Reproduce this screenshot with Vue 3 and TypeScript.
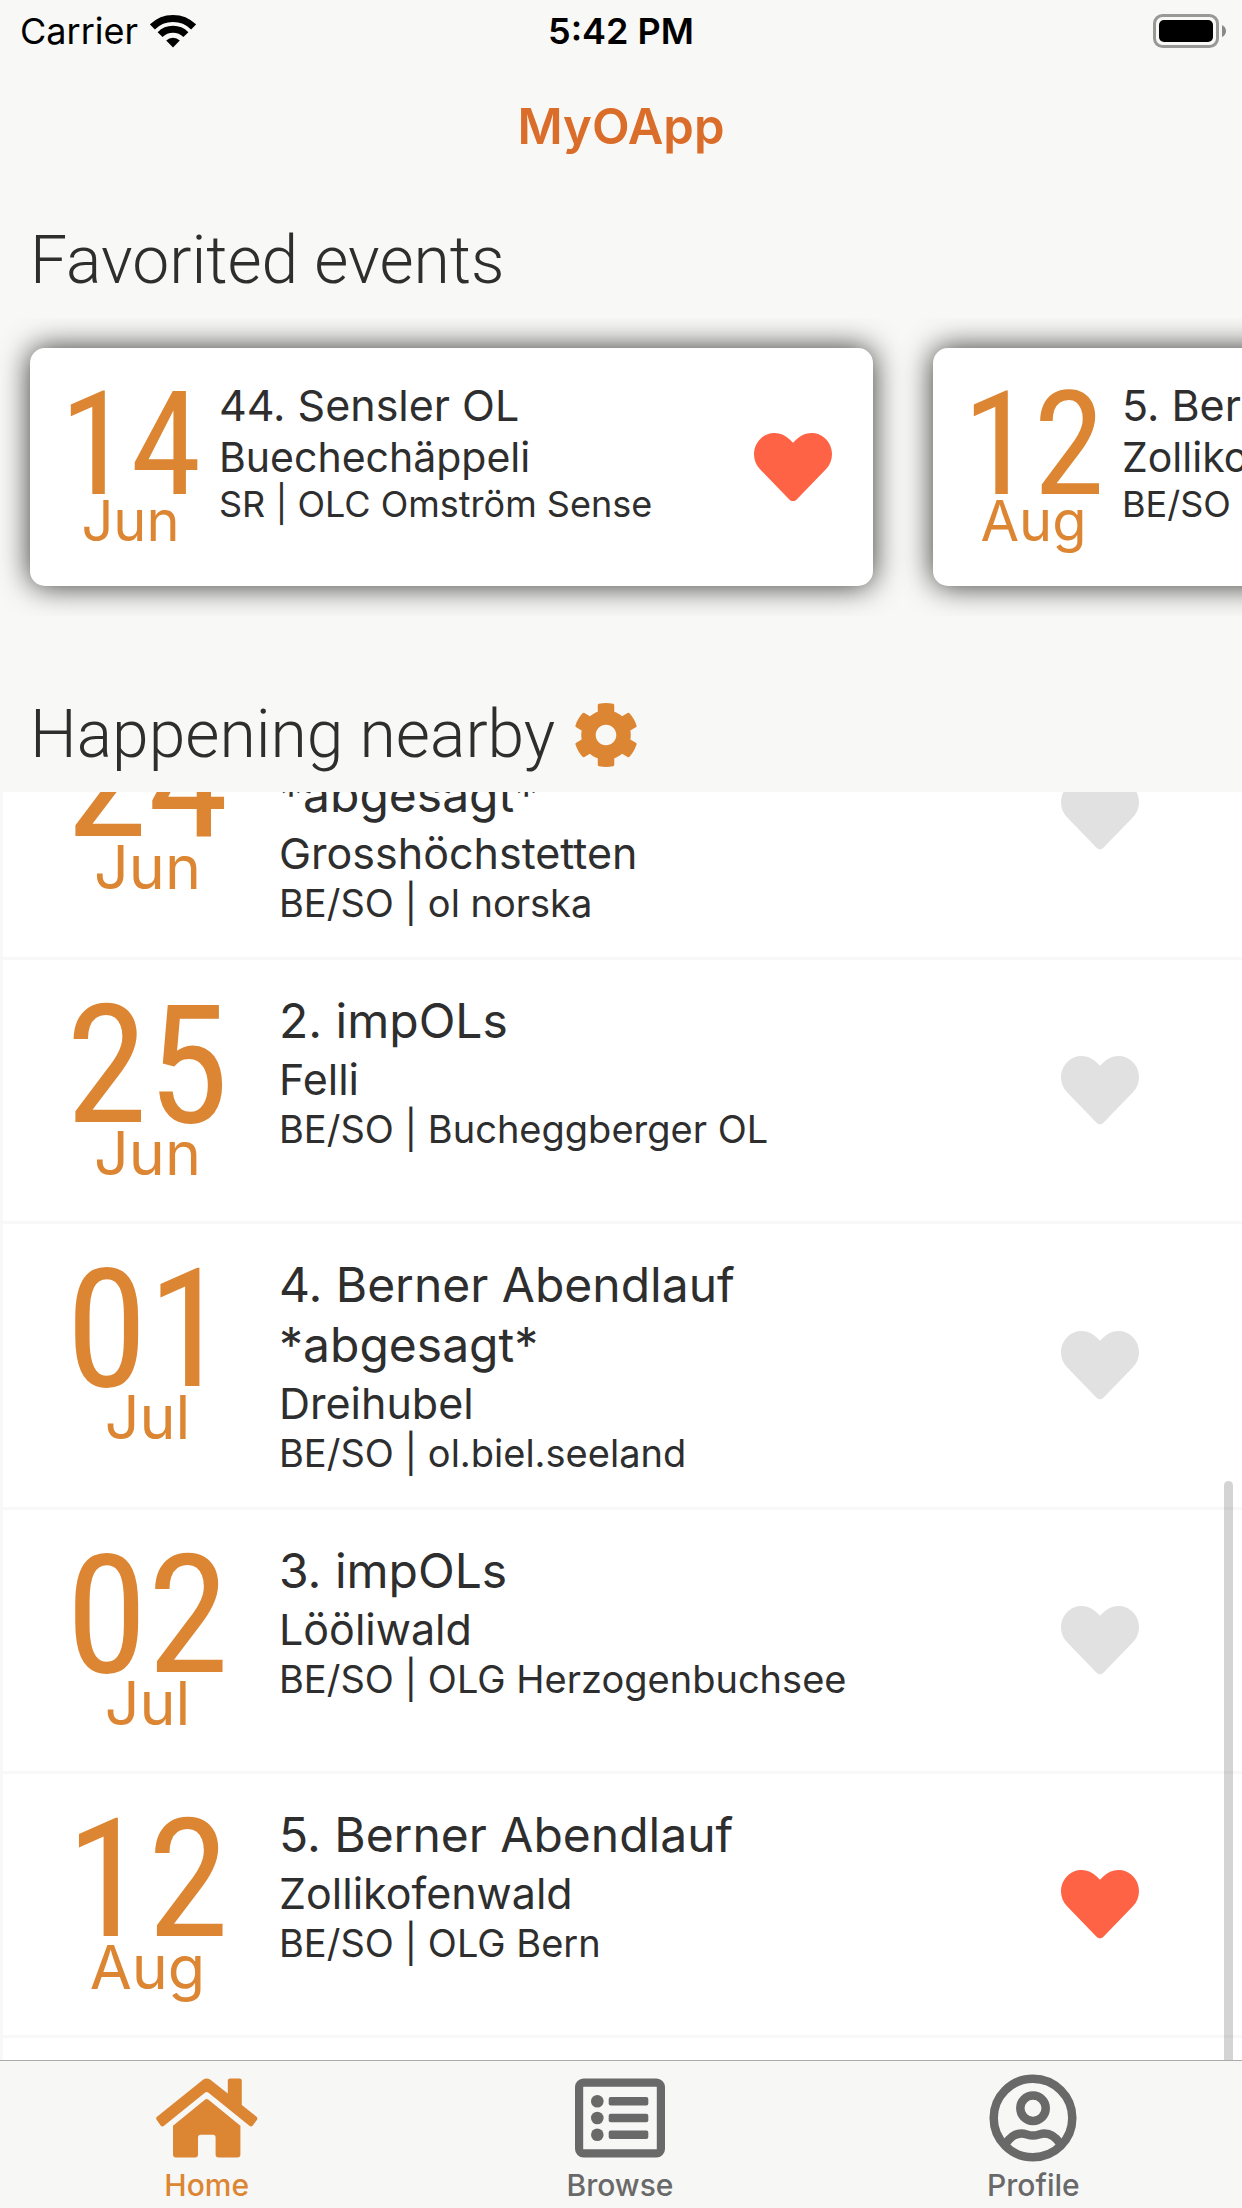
<script setup lang="ts">
import { onMounted, ref } from 'vue'

interface OEvent {
  id: number
  day: string
  month: string
  title: string
  place: string
  organiser: string
  favorite: boolean
}

const favorites = ref<OEvent[]>([
  { id: 1, day: '14', month: 'Jun', title: '44. Sensler OL', place: 'Buechechäppeli', organiser: 'SR | OLC Omström Sense', favorite: true },
  { id: 7, day: '12', month: 'Aug', title: '5. Berner Abendlauf', place: 'Zollikofenwald', organiser: 'BE/SO | OLG Bern', favorite: true },
])

const nearby = ref<OEvent[]>([
  { id: 3, day: '24', month: 'Jun', title: '3. Berner Abendlauf *abgesagt*', place: 'Grosshöchstetten', organiser: 'BE/SO | ol norska', favorite: false },
  { id: 4, day: '25', month: 'Jun', title: '2. impOLs', place: 'Felli', organiser: 'BE/SO | Bucheggberger OL', favorite: false },
  { id: 5, day: '01', month: 'Jul', title: '4. Berner Abendlauf *abgesagt*', place: 'Dreihubel', organiser: 'BE/SO | ol.biel.seeland', favorite: false },
  { id: 6, day: '02', month: 'Jul', title: '3. impOLs', place: 'Lööliwald', organiser: 'BE/SO | OLG Herzogenbuchsee', favorite: false },
  { id: 7, day: '12', month: 'Aug', title: '5. Berner Abendlauf', place: 'Zollikofenwald', organiser: 'BE/SO | OLG Bern', favorite: true },
])

const list = ref<HTMLElement | null>(null)

onMounted(() => {
  if (list.value) list.value.scrollTop = 118
})

const heartPath =
  'M462.3 62.6C407.5 15.9 326 24.3 275.7 76.2L256 96.5l-19.7-20.3C186.1 24.3 104.5 15.9 49.7 62.6c-62.8 53.6-66.1 149.8-9.9 207.9l193.5 199.8c12.5 12.9 32.8 12.9 45.3 0l193.5-199.8c56.3-58.1 53-154.3-9.8-207.9z'
</script>

<template>
  <div class="app">
    <div class="status">
      <div class="carrier">
        <span>Carrier</span>
        <svg width="46" height="34" viewBox="0 0 46 34" aria-hidden="true">
          <g fill="none" stroke="#000" stroke-width="7">
            <path d="M2.4 12.9A29.2 29.2 0 0 1 43.6 12.9" />
            <path d="M10.1 20.6A18.2 18.2 0 0 1 35.9 20.6" />
          </g>
          <path d="M23 33.5L16.2 26.6A9.8 9.8 0 0 1 29.8 26.6Z" />
        </svg>
      </div>
      <div class="time">5:42 PM</div>
      <div class="battery">
        <svg width="74" height="34" viewBox="0 0 74 34" aria-hidden="true">
          <rect x="2.5" y="1.5" width="63" height="31" rx="8" fill="none" stroke="#989896" stroke-width="3" />
          <rect x="7" y="6" width="54" height="22" rx="5" />
          <path d="M70 11Q74 13 74 17T70 23Z" fill="#8a8a88" />
        </svg>
      </div>
    </div>

    <header class="navbar">
      <h1>MyOApp</h1>
    </header>

    <section class="favorites">
      <h2 class="heading">Favorited events</h2>
      <div class="cards">
        <article v-for="event in favorites" :key="event.id" class="card">
          <div class="date">
            <span class="day">{{ event.day }}</span>
            <span class="month">{{ event.month }}</span>
          </div>
          <div class="info">
            <div class="title">{{ event.title }}</div>
            <div class="place">{{ event.place }}</div>
            <div class="organiser">{{ event.organiser }}</div>
          </div>
          <button
            type="button"
            class="heart"
            :class="{ active: event.favorite }"
            aria-label="Toggle favorite"
            @click="event.favorite = !event.favorite"
          >
            <svg viewBox="0 32 512 448" aria-hidden="true"><path :d="heartPath" /></svg>
          </button>
        </article>
      </div>
    </section>

    <section class="nearby">
      <div class="heading-row">
        <h2 class="heading">Happening nearby</h2>
        <button type="button" class="settings" aria-label="Settings">
          <svg viewBox="0 0 512 512" aria-hidden="true">
            <path d="M487.4 315.7l-42.6-24.6c4.3-23.2 4.3-47 0-70.2l42.6-24.6c4.9-2.8 7.1-8.6 5.5-14-11.1-35.6-30-67.8-54.7-94.6-3.8-4.1-10-5.1-14.8-2.3L380.8 110c-17.9-15.4-38.5-27.3-60.8-35.1V25.8c0-5.6-3.9-10.5-9.4-11.7-36.7-8.2-74.3-7.8-109.2 0-5.5 1.2-9.4 6.1-9.4 11.7V75c-22.2 7.9-42.8 19.8-60.8 35.1L88.7 85.5c-4.9-2.8-11-1.9-14.8 2.3-24.7 26.7-43.6 58.9-54.7 94.6-1.7 5.4.6 11.2 5.5 14L67.3 221c-4.3 23.2-4.3 47 0 70.2l-42.6 24.6c-4.9 2.8-7.1 8.6-5.5 14 11.1 35.6 30 67.8 54.7 94.6 3.8 4.1 10 5.1 14.8 2.3l42.6-24.6c17.9 15.4 38.5 27.3 60.8 35.1v49.2c0 5.6 3.9 10.5 9.4 11.7 36.7 8.2 74.3 7.8 109.2 0 5.5-1.2 9.4-6.1 9.4-11.7v-49.2c22.2-7.9 42.8-19.8 60.8-35.1l42.6 24.6c4.9 2.8 11 1.9 14.8-2.3 24.7-26.7 43.6-58.9 54.7-94.6 1.5-5.5-.7-11.3-5.6-14.1zM256 336c-44.1 0-80-35.9-80-80s35.9-80 80-80 80 35.9 80 80-35.9 80-80 80z" />
          </svg>
        </button>
      </div>
      <div class="list-frame">
        <div ref="list" class="list">
          <article v-for="event in nearby" :key="event.id" class="row">
            <div class="date">
              <span class="day">{{ event.day }}</span>
              <span class="month">{{ event.month }}</span>
            </div>
            <div class="info">
              <div class="title">{{ event.title }}</div>
              <div class="place">{{ event.place }}</div>
              <div class="organiser">{{ event.organiser }}</div>
            </div>
            <button
              type="button"
              class="heart"
              :class="{ active: event.favorite }"
              aria-label="Toggle favorite"
              @click="event.favorite = !event.favorite"
            >
              <svg viewBox="0 32 512 448" aria-hidden="true"><path :d="heartPath" /></svg>
            </button>
          </article>
        </div>
        <div class="thumb"></div>
      </div>
    </section>

    <nav class="tabs">
      <a href="#home" class="tab current" aria-current="page">
        <svg width="102" height="88" viewBox="0 -4.5 102 88" aria-hidden="true">
          <g fill="currentColor">
            <path d="M47 1.2Q50.7-1.2 54.4 1.2L71.8 15V2Q71.8 0 74 0H83.6Q85.8 0 85.8 2V26.5L100.5 38.2Q102 39.5 101 41.2L96.6 47.2Q95 48.8 93.4 47.2L52.2 14Q50.7 12.8 49.2 14L8 47.2Q6.4 48.8 4.8 47.2L.6 41.2Q-.5 39.5 1 38.2Z" />
            <path d="M49.2 21Q50.7 19.8 52.2 21L84.4 47.3V76Q84.4 79 81.4 79H62.6Q59.6 79 59.6 76V59Q59.6 56.3 57 56.3H44.7Q42 56.3 42 59V76Q42 79 39 79H20Q17 79 17 76V47.3Z" />
          </g>
        </svg>
        <span>Home</span>
      </a>
      <a href="#browse" class="tab">
        <svg width="90" height="88" viewBox="0 -4.5 90 88" aria-hidden="true">
          <rect x="4.1" y="4.1" width="81.8" height="70.8" rx="4.5" fill="none" stroke="currentColor" stroke-width="8.2" />
          <g fill="currentColor">
            <circle cx="22.3" cy="22.7" r="6.3" />
            <circle cx="22.3" cy="39.5" r="6.3" />
            <circle cx="22.3" cy="56.3" r="6.3" />
            <rect x="33.7" y="18.4" width="39.6" height="8.6" rx="2" />
            <rect x="33.7" y="35.2" width="39.6" height="8.6" rx="2" />
            <rect x="33.7" y="52" width="39.6" height="8.6" rx="2" />
          </g>
        </svg>
        <span>Browse</span>
      </a>
      <a href="#profile" class="tab">
        <svg width="88" height="88" viewBox="-44 -44 88 88" aria-hidden="true">
          <g fill="none" stroke="currentColor" stroke-width="8.5">
            <circle r="39.3" />
            <circle cy="-9.7" r="12.7" />
            <path d="M-27 25.5C-22 18-16 15.5-11.5 15.5S-5 17.5 0 17.5 7 15.5 11.5 15.5 22 18 27 25.5" />
          </g>
        </svg>
        <span>Profile</span>
      </a>
    </nav>
  </div>
</template>

<style>
body {
  margin: 0;
  background: #f8f8f6;
}
</style>

<style scoped>
.app {
  display: flex;
  flex-direction: column;
  height: 100vh;
  overflow: hidden;
  background: #f8f8f6;
  color: #2e2e2e;
  font-family: Inter, 'Liberation Sans', sans-serif;
}

button {
  padding: 0;
  border: 0;
  background: none;
  cursor: pointer;
}

svg {
  display: block;
}

.status {
  display: grid;
  grid-template-columns: 1fr auto 1fr;
  align-items: center;
  height: 62px;
  padding: 0 16px;
  color: #000;
  font-size: 36px;
  line-height: 60px;
}

.carrier {
  display: flex;
  align-items: center;
  gap: 12px;
  padding-left: 4px;
}

.time {
  font-weight: 600;
}

.battery {
  justify-self: end;
}

.navbar {
  display: flex;
  align-items: center;
  justify-content: center;
  height: 130px;
}

h1 {
  margin: 0;
  color: #db6d2b;
  font-size: 49px;
  font-weight: 600;
  line-height: 60px;
}

.heading {
  margin: 0;
  font-family: Roboto, sans-serif;
  font-size: 66px;
  font-weight: 300;
  line-height: 76px;
}

.favorites {
  padding-top: 31px;
}

.favorites .heading {
  padding: 0 30px;
}

.cards {
  display: flex;
  gap: 60px;
  margin-top: 19px;
  padding: 30px;
  overflow-x: auto;
  scrollbar-width: none;
}

.card {
  display: flex;
  flex: none;
  box-sizing: border-box;
  width: 843px;
  min-height: 238px;
  padding: 30px;
  border-radius: 15px;
  background: #fff;
  box-shadow: 0 0 30px rgba(0, 0, 0, 0.8);
}

.date {
  display: flex;
  flex: none;
  flex-direction: column;
  align-items: center;
  color: #dc8633;
}

.day {
  font-family: 'Roboto Condensed', Roboto, sans-serif;
}

.card .date {
  width: 141px;
  padding-top: 13px;
}

.card .day {
  font-size: 144px;
  line-height: 108px;
}

.card .month {
  font-size: 56px;
  line-height: 44px;
}

.info {
  flex: 1;
  min-width: 0;
}

.card .info {
  padding-left: 18px;
}

.card .title {
  font-size: 43px;
  line-height: 54px;
}

.card .place {
  font-size: 41px;
  line-height: 50px;
}

.card .organiser {
  font-size: 36px;
  line-height: 44px;
}

.heart {
  flex: none;
  align-self: center;
  color: #e1e1e1;
}

.heart svg {
  width: 78px;
  margin: 0 auto;
  fill: currentColor;
}

.heart.active {
  color: #ff6345;
}

.card .heart {
  width: 100px;
}

.nearby {
  display: flex;
  flex: 1;
  flex-direction: column;
  min-height: 0;
  padding-top: 81px;
}

.heading-row {
  display: flex;
  align-items: center;
  gap: 18px;
  margin-bottom: 19px;
  padding: 0 30px;
}

.settings svg {
  width: 66px;
  height: 66px;
  fill: #dc8633;
}

.list-frame {
  position: relative;
  flex: 1;
  min-height: 0;
}

.list {
  box-sizing: border-box;
  height: 100%;
  padding-bottom: 150px;
  overflow-y: auto;
  scrollbar-width: none;
  border-left: 3px solid #f8f8f8;
  background: #fff;
}

.thumb {
  position: absolute;
  top: 689px;
  right: 9px;
  bottom: 0;
  width: 9px;
  border-radius: 5px 5px 0 0;
  background: rgba(0, 0, 0, 0.17);
}

.row {
  display: flex;
  box-sizing: border-box;
  min-height: 264px;
  padding: 30px 0 30px 62px;
  border-bottom: 3px solid #f8f8f8;
}

.row .date {
  width: 165px;
  padding-top: 11px;
}

.row .day {
  font-size: 165px;
  line-height: 130px;
}

.row .month {
  font-size: 61px;
  line-height: 44px;
}

.row .info {
  padding: 1px 0 2px 49px;
}

.row .title {
  font-size: 48px;
  line-height: 60px;
}

.row .place {
  font-size: 43px;
  line-height: 56px;
}

.row .organiser {
  font-size: 38px;
  line-height: 44px;
}

.row .heart {
  width: 284px;
}

.tabs {
  display: grid;
  grid-template-columns: repeat(3, 1fr);
  flex: none;
  padding-right: 2px;
  border-top: 1px solid #acacaa;
  background: #f7f7f6;
}

.tab {
  display: flex;
  flex-direction: column;
  align-items: center;
  gap: 4px;
  height: 134px;
  padding-top: 13px;
  box-sizing: content-box;
  color: #696969;
  font-size: 30px;
  font-weight: 500;
  line-height: 38px;
  text-decoration: none;
}

.tab.current {
  color: #dc8633;
}
</style>
